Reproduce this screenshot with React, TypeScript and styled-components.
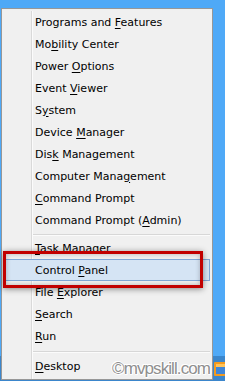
import React from "react";
import styled, { createGlobalStyle } from "styled-components";

const Global = createGlobalStyle`
  html, body { margin: 0; padding: 0; }
  body { width: 225px; height: 381px; overflow: hidden; }
`;

const Desktop = styled.div`
  position: relative;
  width: 225px;
  height: 381px;
  box-sizing: border-box;
  padding: 8px 0 0 1px;
  background: linear-gradient(to bottom, #4fa9f7 0, #4fa9f7 356px, #3b86cc 356px);
  overflow: hidden;
`;

const Menu = styled.div`
  position: relative;
  width: 212px;
  box-sizing: border-box;
  border: 1px solid #979797;
  background: #f0f0f0;
  padding: 2px 0 2px 0;
  display: flex;
  flex-direction: column;
  font-family: "DejaVu Sans", Tahoma, sans-serif;
  font-size: 11px;
  color: #000;
  &::before {
    content: "";
    position: absolute;
    left: 29px;
    top: 2px;
    bottom: 0;
    width: 1px;
    background: #d9d9d9;
    box-shadow: 1px 0 0 #fbfbfb;
  }
`;

const Item = styled.div<{ $active?: boolean }>`
  position: relative;
  height: 22px;
  display: flex;
  align-items: center;
  box-sizing: border-box;
  padding-left: 33px;
  white-space: nowrap;
  ${(p) =>
    p.$active
      ? `
    margin: 0 2px;
    padding-left: 30px;
    border: 1px solid #7fa7d6;
    background: #d5e4f4;
  `
      : ""}
  u { text-decoration: underline; text-underline-offset: 2px; }
`;

const Separator = styled.div<{ $h: number }>`
  height: ${(p) => p.$h}px;
  display: flex;
  align-items: center;
  padding-left: 31px;
  padding-right: 2px;
  &::after {
    content: "";
    flex: 1;
    height: 1px;
    background: #d7d7d7;
    box-shadow: 0 1px 0 #fbfbfb;
  }
`;

const RedBox = styled.div`
  position: absolute;
  left: 3px;
  top: 251px;
  width: 200px;
  height: 37px;
  box-sizing: border-box;
  border: 3px solid #c10000;
  box-shadow: 0 1px 6px rgba(0, 0, 0, 0.45), inset 0 0 5px rgba(0, 0, 0, 0.25);
`;

const Watermark = styled.div`
  position: absolute;
  left: 112px;
  top: 360px;
  font-family: "Liberation Sans", Arial, sans-serif;
  font-size: 17px;
  letter-spacing: -0.9px;
  line-height: 18px;
  color: #8f8f8f;
  text-shadow: 1px 0 0 #fff, -1px 0 0 #fff, 0 1px 0 #fff, 0 -1px 0 #fff,
    1px 1px 0 #fff, -1px -1px 0 #fff;
  white-space: nowrap;
`;

const TrayIcon = styled.div`
  position: absolute;
  left: 214px;
  top: 362px;
  width: 13px;
  height: 14px;
  box-sizing: border-box;
  border: 2px solid #f39a1f;
  background: #3f86d8;
  border-radius: 1px;
  box-shadow: inset 0 3px 0 #ffc35a;
`;

type Entry = { pre: string; key: string; post: string; active?: boolean } | { sep: number };

const entries: Entry[] = [
  { pre: "Programs and ", key: "F", post: "eatures" },
  { pre: "Mo", key: "b", post: "ility Center" },
  { pre: "Power ", key: "O", post: "ptions" },
  { pre: "Event ", key: "V", post: "iewer" },
  { pre: "S", key: "y", post: "stem" },
  { pre: "Device ", key: "M", post: "anager" },
  { pre: "Dis", key: "k", post: " Management" },
  { pre: "Computer Mana", key: "g", post: "ement" },
  { pre: "", key: "C", post: "ommand Prompt" },
  { pre: "Command Prompt (", key: "A", post: "dmin)" },
  { sep: 6 },
  { pre: "", key: "T", post: "ask Manager" },
  { pre: "Control ", key: "P", post: "anel", active: true },
  { pre: "File ", key: "E", post: "xplorer" },
  { pre: "", key: "S", post: "earch" },
  { pre: "", key: "R", post: "un" },
  { sep: 8 },
  { pre: "", key: "D", post: "esktop" },
];

export default function App() {
  return (
    <Desktop>
      <Global />
      <Menu>
        {entries.map((e, i) =>
          "sep" in e ? (
            <Separator key={i} $h={e.sep} />
          ) : (
            <Item key={i} $active={e.active}>
              <span>
                {e.pre}
                <u>{e.key}</u>
                {e.post}
              </span>
            </Item>
          )
        )}
      </Menu>
      <RedBox />
      <Watermark>©mvpskill.com</Watermark>
      <TrayIcon />
    </Desktop>
  );
}
